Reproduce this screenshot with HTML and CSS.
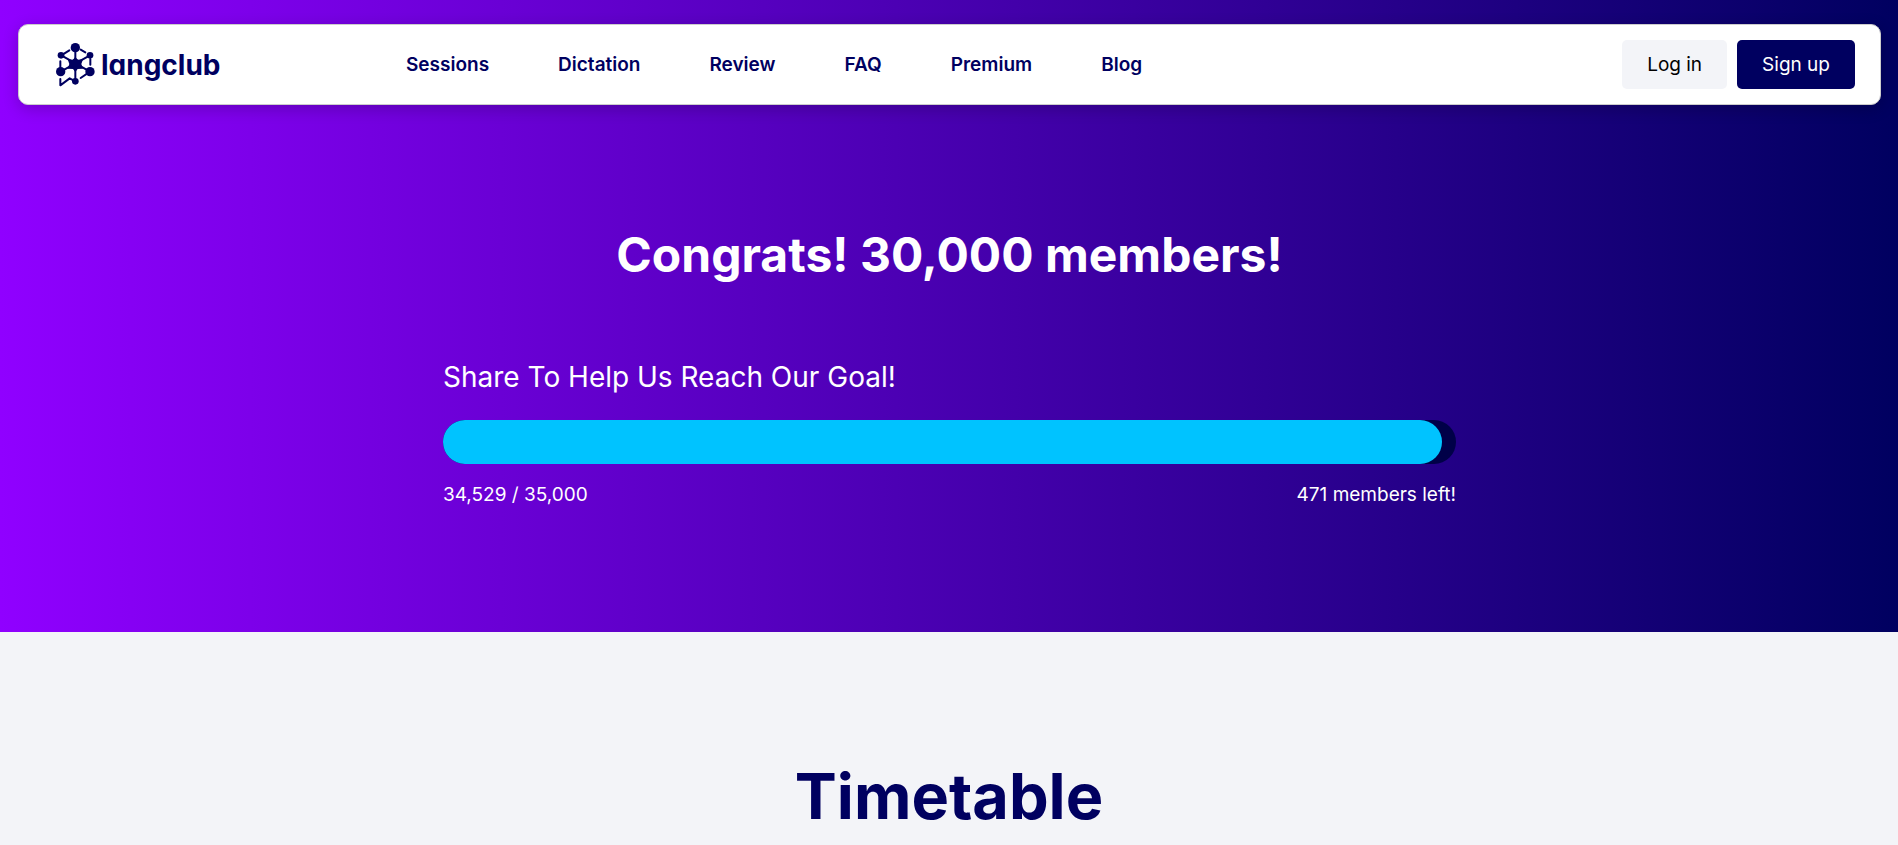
FILE: index.html
```html
<!DOCTYPE html>
<html lang="en">
<head>
    <meta charset="utf-8">
    <meta name="viewport" content="width=device-width, initial-scale=1">
    <title>Langclub</title>
    <link rel="stylesheet" href="styles.css">
</head>
<body>
    <div class="hero">
        <header class="navbar">
            <a class="logo" href="#" aria-label="langclub">
                <svg class="logo-mark" viewBox="33 26 117 132" aria-hidden="true">
                    <g fill="none" stroke="currentColor" stroke-width="6" stroke-linecap="round" stroke-linejoin="round">
                        <path d="M91 41V141M49 63L135 112M135 63L47 112"/>
                        <path d="M49 63L73 48M107 46L121 54M136 74V91M46 81V100M135 112L107 131M46 134V153L74 132L91 141"/>
                    </g>
                    <g fill="currentColor">
                        <circle cx="91" cy="40" r="14"/>
                        <circle cx="48" cy="63" r="10"/>
                        <circle cx="135" cy="63" r="10"/>
                        <path d="M91 67L98 76L114 75L109 89L114 103L98 104L91 113L84 104L68 103L73 89L68 75L84 76Z"/>
                        <circle cx="91" cy="89" r="15"/>
                        <circle cx="47" cy="112" r="14"/>
                        <circle cx="135" cy="112" r="14"/>
                        <circle cx="91" cy="141" r="10"/>
                    </g>
                </svg>
                <span class="logo-text">langclub</span>
            </a>
            <nav class="menu">
                <a href="#">Sessions</a>
                <a href="#">Dictation</a>
                <a href="#">Review</a>
                <a href="#">FAQ</a>
                <a href="#">Premium</a>
                <a href="#">Blog</a>
            </nav>
            <div class="actions">
                <button type="button" class="btn">Log in</button>
                <button type="button" class="btn btn-primary">Sign up</button>
            </div>
        </header>

        <section class="goal">
            <h1>Congrats! 30,000 members!</h1>
            <p class="goal-title">Share To Help Us Reach Our Goal!</p>
            <div class="progress" role="progressbar" aria-label="Members" aria-valuemin="0" aria-valuemax="35000" aria-valuenow="34529">
                <div class="progress-bar" style="width: 98.65%"></div>
            </div>
            <div class="goal-numbers">
                <span>34,529 / 35,000</span>
                <span>471 members left!</span>
            </div>
        </section>
    </div>

    <section class="timetable">
        <h2>Timetable</h2>
    </section>
</body>
</html>
```

FILE: styles.css
```css
* { box-sizing: border-box; }
body {
    margin: 0;
    font-family: Inter, "Liberation Sans", sans-serif;
    font-size: 19px;
    line-height: 28px;
    background-color: #f3f4f8;
    color: #000060;
}
h1, h2, p { margin: 0; }
a { color: inherit; text-decoration: none; }

.hero {
    padding: 24px 17px 123px 18px;
    background: linear-gradient(90deg, #9000ff, #000060);
}

/* Navbar */
.navbar {
    display: flex;
    align-items: center;
    padding: 15px 25px 15px 37px;
    background-color: #fff;
    border: 1px solid #ccc;
    border-radius: 10px;
    box-shadow: 0 4px 16px rgba(0,0,0,0.2);
}
.logo { display: flex; align-items: center; gap: 6px; width: 350px; }
.logo-mark { width: 39px; height: 44px; }
.logo-text {
    font-size: 28px;
    font-weight: 700;
    font-feature-settings: "cv11";
}
.menu { display: flex; gap: 69px; font-weight: 600; }
.actions { display: flex; gap: 10px; margin-left: auto; }
.btn {
    height: 49px;
    padding: 0 25px;
    border: 0;
    border-radius: 5px;
    font: inherit;
    background-color: #f3f4f8;
    color: #000;
    cursor: pointer;
}
.btn-primary { background-color: #000060; color: #fff; }

/* Member goal */
.goal {
    max-width: 1013px;
    margin: 0 auto;
    padding-top: 120px;
    color: #fff;
}
.goal h1 { font-size: 48px; line-height: 60px; text-align: center; }
.goal-title { margin-top: 72px; font-size: 28px; line-height: 40px; }
.progress {
    height: 44px;
    margin: 23px 0 17px;
    border-radius: 22px;
    background-color: #000048;
}
.progress-bar { height: 100%; border-radius: 22px; background-color: #00c3ff; }
.goal-numbers { display: flex; justify-content: space-between; }

/* Timetable */
.timetable { padding: 124px 16px; text-align: center; }
.timetable h2 { font-size: 63px; line-height: 80px; }
```
